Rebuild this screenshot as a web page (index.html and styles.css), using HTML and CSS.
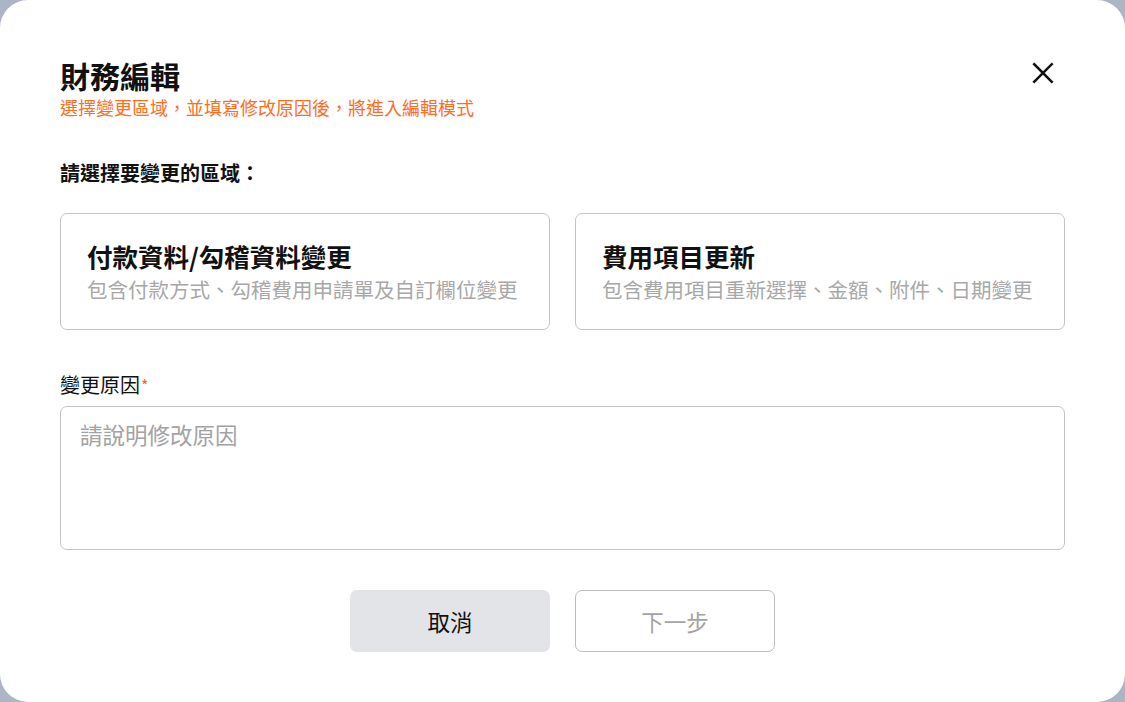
FILE: index.html
```html
<!DOCTYPE html>
<html lang="zh-Hant">
<head>
<meta charset="utf-8">
<title>財務編輯</title>
<link rel="stylesheet" href="styles.css">
</head>
<body>
<div class="modal">
  <div class="header">
    <div class="heading">
      <h1 class="title">財務編輯</h1>
      <p class="subtitle">選擇變更區域，並填寫修改原因後，將進入編輯模式</p>
    </div>
    <button class="close" aria-label="關閉">
      <svg width="24" height="24" viewBox="0 0 24 24"><path d="M3.2 3.2 L20.8 20.8 M20.8 3.2 L3.2 20.8" stroke="#111" stroke-width="2.5" stroke-linecap="square" fill="none"/></svg>
    </button>
  </div>
  <div class="section-label">請選擇要變更的區域：</div>
  <div class="options">
    <div class="option">
      <div class="option-title">付款資料/勾稽資料變更</div>
      <div class="option-desc">包含付款方式、勾稽費用申請單及自訂欄位變更</div>
    </div>
    <div class="option">
      <div class="option-title">費用項目更新</div>
      <div class="option-desc">包含費用項目重新選擇、金額、附件、日期變更</div>
    </div>
  </div>
  <div class="field-label">變更原因<span class="req">*</span></div>
  <div class="reason"><span class="placeholder">請說明修改原因</span></div>
  <div class="actions">
    <button class="btn btn-cancel">取消</button>
    <button class="btn btn-next">下一步</button>
  </div>
</div>
</body>
</html>
```
FILE: styles.css
```css
* { box-sizing: border-box; }
html, body { margin: 0; padding: 0; }
body {
  background: #adb4c3;
  font-family: "Noto Sans CJK TC", "Noto Sans", sans-serif;
  color: #111;
}
.modal {
  width: 1125px;
  height: 702px;
  background: #fff;
  border-radius: 28px;
  padding: 55px 60px 0 60px;
}
.header {
  display: flex;
  justify-content: space-between;
  align-items: flex-start;
}
.title {
  margin: 0;
  font-size: 30px;
  line-height: 40px;
  font-weight: 700;
  color: #111;
}
.subtitle {
  margin: 0;
  font-size: 18px;
  line-height: 24px;
  color: #ff6d1f;
}
.close {
  margin: 6px 10px 0 0;
  width: 24px;
  height: 24px;
  padding: 0;
  border: 0;
  background: none;
  display: block;
}
.close svg { display: block; }
.section-label {
  margin-top: 40px;
  font-size: 20px;
  line-height: 28px;
  font-weight: 700;
}
.options {
  margin-top: 26px;
  display: grid;
  grid-template-columns: 1fr 1fr;
  gap: 25px;
}
.option {
  height: 117px;
  border: 1px solid #c4c4c4;
  border-radius: 7px;
  padding: 25px 26px;
}
.option-title {
  font-size: 25.5px;
  line-height: 34px;
  font-weight: 700;
  color: #111;
}
.option-desc {
  margin-top: 2px;
  font-size: 20.5px;
  line-height: 28px;
  color: #a8a8a8;
  white-space: nowrap;
}
.field-label {
  margin-top: 41px;
  font-size: 20px;
  line-height: 28px;
}
.req {
  color: #ff5a2a;
  font-size: 16px;
  vertical-align: top;
  margin-left: 1px;
}
.reason {
  margin-top: 7px;
  height: 144px;
  border: 1px solid #c4c4c4;
  border-radius: 7px;
  padding: 12px 19px;
}
.placeholder {
  font-size: 22.5px;
  line-height: 30px;
  color: #a3a3a3;
}
.actions {
  margin-top: 40px;
  display: flex;
  justify-content: center;
  gap: 25px;
}
.btn {
  width: 200px;
  height: 62px;
  border-radius: 7px;
  font-family: "Noto Sans CJK TC", "Noto Sans", sans-serif;
  font-size: 22.5px;
  padding: 0;
}
.btn-cancel {
  background: #e3e4e8;
  border: 0;
  color: #111;
}
.btn-next {
  background: #fff;
  border: 1px solid #bdbdbd;
  color: #a3a3a3;
}
```
